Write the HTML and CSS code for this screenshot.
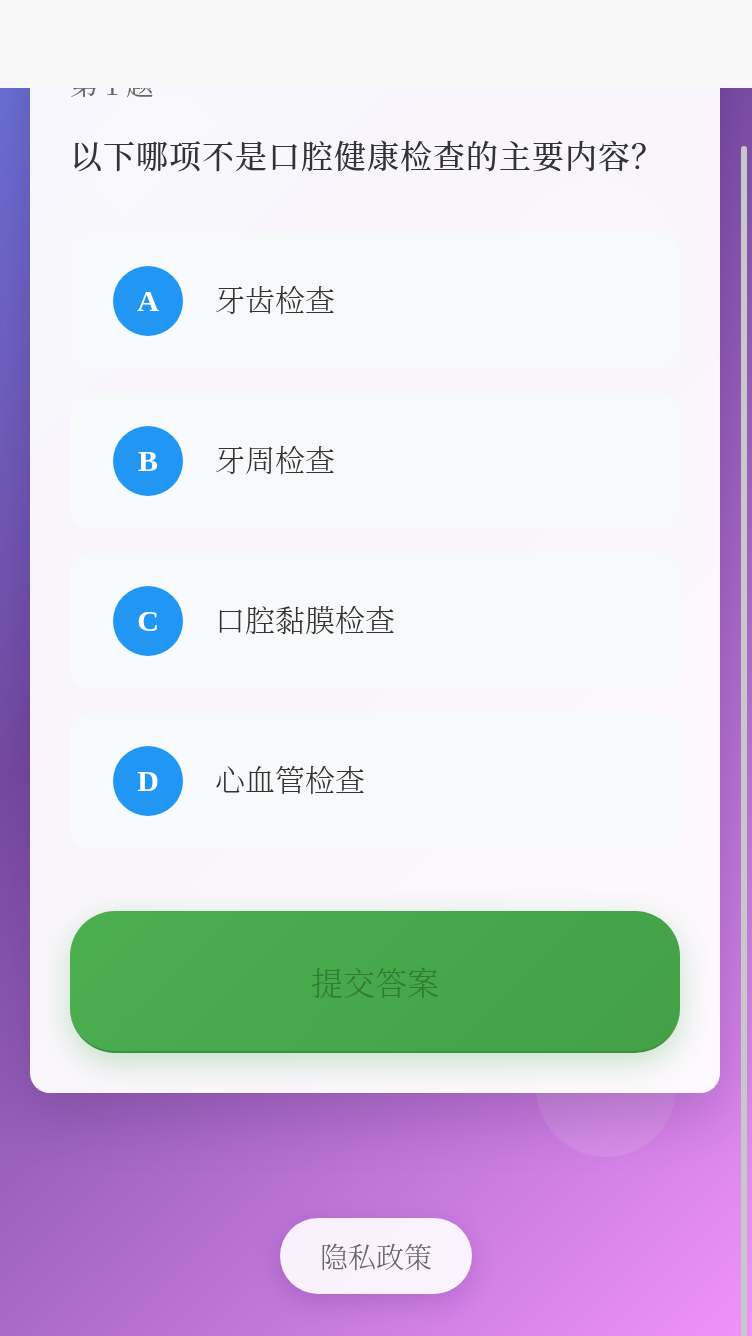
FILE: index.html
```html
<!DOCTYPE html>
<html lang="zh-CN">
<head>
<meta charset="utf-8">
<title>口腔健康问答</title>
<link rel="stylesheet" href="styles.css">
</head>
<body>
<div class="decor">
  <span class="bubble bubble-1"></span>
  <span class="bubble bubble-2"></span>
  <span class="bubble bubble-3"></span>
</div>
<main class="page">
  <section class="quiz-card">
    <div class="q-index">第 1 题</div>
    <h2 class="q-text">以下哪项不是口腔健康检查的主要内容？</h2>
    <ul class="options">
      <li class="option"><span class="badge">A</span><span class="label">牙齿检查</span></li>
      <li class="option"><span class="badge">B</span><span class="label">牙周检查</span></li>
      <li class="option"><span class="badge">C</span><span class="label">口腔黏膜检查</span></li>
      <li class="option"><span class="badge">D</span><span class="label">心血管检查</span></li>
    </ul>
    <button class="submit" type="button">提交答案</button>
  </section>
  <a class="privacy" href="#">隐私政策</a>
</main>
<header class="topbar"></header>
<div class="scroll-thumb"></div>
</body>
</html>
```

FILE: styles.css
```css
* { box-sizing: border-box; }

html, body {
  margin: 0;
  padding: 0;
  height: 100%;
}

body {
  font-family: "Liberation Serif", "Noto Serif CJK SC", "Source Han Serif SC", "AR PL UMing CN", "Noto Sans CJK SC", serif;
  background-image: linear-gradient(135deg, #667eea 0%, #764ba2 42%, #f093fb 100%);
  background-size: 100% 1500px;
  background-position: 0 100%;
  background-repeat: no-repeat;
  background-color: #764ba2;
  overflow: hidden;
  color: #333;
}

.decor {
  position: fixed;
  inset: 0;
  pointer-events: none;
}

.bubble {
  position: absolute;
  border-radius: 50%;
  background: rgba(255, 255, 255, 0.1);
}

.bubble-1 { left: 536px; top: 1017px; width: 140px; height: 140px; }
.bubble-2 { left: 90px; top: 90px; width: 140px; height: 140px; }
.bubble-3 { left: 510px; top: 180px; width: 170px; height: 170px; }

.page {
  position: relative;
  height: 100vh;
  display: flex;
  flex-direction: column;
  justify-content: flex-end;
  align-items: center;
  padding-bottom: 42px;
  overflow: hidden;
}

.quiz-card {
  flex-shrink: 0;
  align-self: flex-start;
  width: 690px;
  margin-left: 30px;
  padding: 40px;
  background: rgba(255, 255, 255, 0.95);
  border-radius: 20px;
  box-shadow: 0 20px 60px rgba(30, 10, 60, 0.2);
}

.q-index {
  font-size: 28px;
  line-height: 40px;
  color: #666;
  margin-bottom: 27px;
}

.q-text {
  margin: 0 0 52px;
  font-size: 32px;
  line-height: 48px;
  font-weight: 500;
  letter-spacing: 1px;
  color: #333;
}

.options {
  list-style: none;
  margin: 0 0 62px;
  padding: 0;
  display: flex;
  flex-direction: column;
  gap: 24px;
}

.option {
  display: flex;
  align-items: center;
  gap: 32px;
  padding: 31px 41px;
  background: #f8f9fa;
  border: 2px solid #f8f9fa;
  border-radius: 20px;
}

.badge {
  width: 70px;
  height: 70px;
  flex-shrink: 0;
  border-radius: 50%;
  background: #2196f3;
  color: #fff;
  font-weight: 700;
  font-size: 30px;
  display: flex;
  align-items: center;
  justify-content: center;
}

.label {
  font-size: 30px;
  line-height: 40px;
  font-weight: 300;
  color: #333;
}

.submit {
  display: block;
  width: 100%;
  height: 142px;
  border: none;
  border-bottom: 2px solid #3b8f3e;
  border-radius: 45px;
  background: linear-gradient(135deg, #4caf50 0%, #43a047 100%);
  color: #2e7d32;
  font-family: inherit;
  font-size: 32px;
  font-weight: 300;
  box-shadow: 0 10px 30px rgba(76, 175, 80, 0.3);
  cursor: pointer;
}

.privacy {
  flex-shrink: 0;
  margin-top: 125px;
  height: 76px;
  padding: 0 40px;
  display: flex;
  align-items: center;
  border-radius: 38px;
  background: rgba(255, 255, 255, 0.9);
  color: #666;
  font-size: 28px;
  font-weight: 300;
  text-decoration: none;
  box-shadow: 0 8px 24px rgba(80, 30, 120, 0.2);
}

.topbar {
  position: fixed;
  top: 0;
  left: 0;
  right: 0;
  height: 88px;
  background: #f8f8f8;
}

.scroll-thumb {
  position: fixed;
  right: 5px;
  top: 146px;
  bottom: 0;
  width: 6px;
  border-radius: 3px 3px 0 0;
  background: #c8c8c8;
}
```
